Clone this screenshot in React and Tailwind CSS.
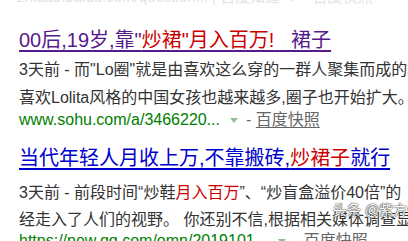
import React from 'react';

const font = { fontFamily: '"Liberation Sans", Arial, "Noto Sans CJK SC", sans-serif' };

function UrlLine({ url }) {
  return (
    <div className="flex items-center leading-[16px] text-[16px] whitespace-nowrap pl-[19px]">
      <span className="text-[#008000]">{url}</span>
      <span className="ml-[10px] mr-[8px] w-0 h-0 border-l-[4px] border-r-[4px] border-t-[5px] border-l-transparent border-r-transparent border-t-[#8fbf8f]" />
      <span className="text-[#666]">
        - <span className="underline underline-offset-2">百度快照</span>
      </span>
    </div>
  );
}

export default function App() {
  return (
    <div style={font} className="relative w-[408px] h-[241px] overflow-hidden bg-white">
      {/* previous result, cut off at the top */}
      <div className="h-[7px] overflow-hidden pl-[17px]">
        <div className="-mt-[11px] leading-[16px] text-[15px] text-[#e2e2e2] whitespace-nowrap">
          zhidao.baidu.com/question... | 百度知道 ▼ - 百度快照
        </div>
      </div>

      <div className="mt-[21px] pl-[19px] leading-[24px] text-[20px] whitespace-nowrap underline underline-offset-[3px] text-[#551a8b]">
        00后,19岁,靠"<span className="text-[#cc0000]">炒裙"月入百万!</span>_ 裙子
      </div>

      <div className="mt-[4px] pl-[19px] leading-[28px] text-[16px] text-[#333] whitespace-nowrap">
        <div>3天前 - 而"Lo圈"就是由喜欢这么穿的一群人聚集而成的群体</div>
        <div>喜欢Lolita风格的中国女孩也越来越多,圈子也开始扩大。</div>
      </div>
      <UrlLine url="www.sohu.com/a/3466220..." />

      <div className="mt-[18px] pl-[19px] leading-[24px] text-[20px] whitespace-nowrap underline underline-offset-[3px] text-[#0000cc]">
        当代年轻人月收上万,不靠搬砖,<span className="text-[#cc0000]">炒裙子</span>就行
      </div>

      <div className="mt-[9px] pl-[19px] leading-[27px] text-[16px] text-[#333] whitespace-nowrap">
        <div>
          3天前 - 前段时间“炒鞋<span className="text-[#cc0000]">月入百万</span>”、“炒盲盒溢价40倍”的
        </div>
        <div>经走入了人们的视野。 你还别不信,根据相关媒体调查显示</div>
      </div>
      <UrlLine url="https://new.qq.com/omn/2019101..." />

      <div
        className="absolute left-[333px] top-[202px] text-[14px] leading-[16px] text-white whitespace-nowrap"
        style={{ textShadow: '0 0 1px #444, 0 0 1px #444, 0 0 2px #777' }}
      >
        头条 @紫方便
      </div>
    </div>
  );
}
